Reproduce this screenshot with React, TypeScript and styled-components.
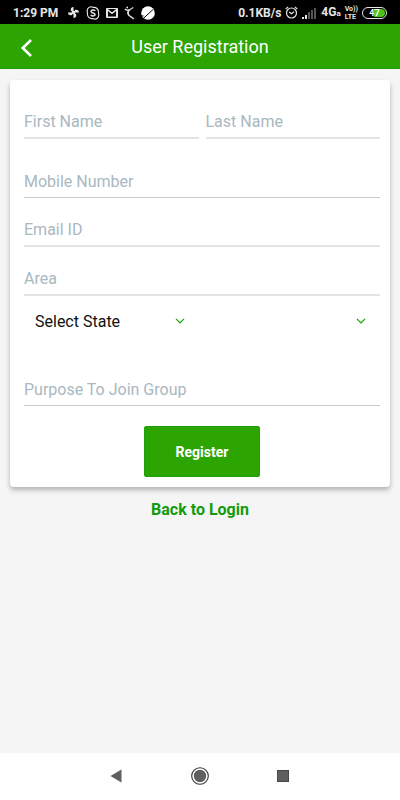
import React from "react";
import styled, { createGlobalStyle } from "styled-components";

const green = "#2ca502";

const GlobalStyle = createGlobalStyle`
  *, *::before, *::after { box-sizing: border-box; }
  body {
    margin: 0;
    background: #f5f5f5;
    font-family: Roboto, "Liberation Sans", sans-serif;
  }
`;

const Screen = styled.div`
  display: flex;
  flex-direction: column;
  min-height: 100vh;
  background: #f5f5f5;
`;

const StatusBar = styled.div`
  display: flex;
  align-items: center;
  justify-content: space-between;
  height: 24px;
  padding: 1px 13px 0;
  background: #000;
  color: #e6e6e6;
  font-size: 12px;
  font-weight: 700;
  line-height: 14px;
  white-space: nowrap;
`;

const StatusGroup = styled.div<{ $gap: number }>`
  display: flex;
  align-items: center;
  gap: ${(p) => p.$gap}px;
`;

const Clock = styled.span`
  padding-right: 3px;
`;

const Network = styled.span`
  display: flex;
  align-items: baseline;
`;

const NetworkSuffix = styled.span`
  font-size: 8px;
`;

const Volte = styled.span`
  display: flex;
  flex-direction: column;
  font-size: 7px;
  line-height: 8px;
`;

const Battery = styled.span`
  display: flex;
  align-items: center;
  justify-content: center;
  width: 25px;
  height: 12px;
  border: 1px solid #e6e6e6;
  border-radius: 6px;
  background: linear-gradient(90deg, #000 50%, #4cc417 50%);
  background-clip: content-box;
  padding: 1px;
  color: #fff;
  font-size: 9px;
  line-height: 8px;
`;

const Header = styled.header`
  display: grid;
  grid-template-columns: 48px 1fr 48px;
  align-items: center;
  height: 45px;
  background: ${green};
  border-bottom: 1px solid #169c06;
`;

const BackButton = styled.button`
  display: flex;
  align-items: center;
  height: 44px;
  padding: 4px 0 0 20px;
  border: 0;
  background: none;
  color: #fff;
  cursor: pointer;
`;

const Title = styled.h1`
  margin: 0;
  padding-top: 2px;
  color: #fff;
  font-size: 18px;
  font-weight: 400;
  line-height: 24px;
  text-align: center;
`;

const Main = styled.main`
  display: flex;
  flex: 1;
  flex-direction: column;
  padding: 11px 10px;
`;

const Card = styled.form`
  display: flex;
  flex-direction: column;
  padding: 10px 10px 10px 14px;
  border-radius: 4px;
  background: #fff;
  box-shadow: 0 3px 5px rgba(0, 0, 0, 0.27);
`;

const Columns = styled.div<{ $after: number }>`
  display: grid;
  grid-template-columns: 1fr 1fr;
  gap: 7px;
  margin-bottom: ${(p) => p.$after}px;
`;

const Field = styled.input<{ $soft?: boolean }>`
  width: 100%;
  min-width: 0;
  height: 49px;
  padding: 16px 0 0;
  border: 0;
  border-bottom: ${(p) => (p.$soft ? "2px solid #e4e4e4" : "1px solid #c9c9c9")};
  border-radius: 0;
  outline: 0;
  background: transparent;
  color: #111;
  font-family: inherit;
  font-size: 16px;
  line-height: 20px;

  &::placeholder {
    color: #a9b8c1;
    opacity: 1;
  }
`;

const SelectBox = styled.label`
  display: grid;
  align-items: center;
  height: 50px;

  & > * {
    grid-area: 1 / 1;
  }

  & > svg {
    justify-self: end;
    margin-right: 14px;
    pointer-events: none;
  }
`;

const Select = styled.select`
  width: 100%;
  height: 50px;
  padding: 0 28px 0 11px;
  border: 0;
  outline: 0;
  appearance: none;
  background: transparent;
  color: #111;
  font-family: inherit;
  font-size: 16px;
`;

const RegisterButton = styled.button`
  align-self: center;
  height: 51px;
  margin-top: 20px;
  padding: 0 31px;
  border: 1px solid #1d9f0a;
  border-radius: 2px;
  background: ${green};
  color: #fff;
  font-family: inherit;
  font-size: 14px;
  font-weight: 700;
  cursor: pointer;
`;

const LoginLink = styled.a`
  align-self: center;
  margin-top: 13px;
  color: #129b0b;
  font-size: 16px;
  font-weight: 700;
  line-height: 20px;
  text-decoration: none;
`;

const NavBar = styled.nav`
  display: flex;
  align-items: center;
  justify-content: center;
  gap: 59px;
  height: 47px;
  padding-bottom: 1px;
  background: #fff;
`;

const NavButton = styled.button`
  display: flex;
  align-items: center;
  justify-content: center;
  width: 24px;
  height: 24px;
  padding: 0;
  border: 0;
  background: none;
  cursor: pointer;
`;

const PinwheelIcon = () => (
  <svg width="13" height="13" viewBox="0 0 13 13" fill="#e6e6e6" aria-hidden="true">
    <path d="M6.5 6.5V1C4.2 1 3.2 3 4 5H6.5ZM6.5 6.5H12C12 4.2 10 3.2 8 4V6.5ZM6.5 6.5V12C8.8 12 9.8 10 9 8H6.5ZM6.5 6.5H1C1 8.8 3 9.8 5 9V6.5Z" />
    <path d="M4.8 4.8H8.2V8.2H4.8Z" />
  </svg>
);

const SkypeIcon = () => (
  <svg width="14" height="14" viewBox="0 0 14 14" fill="none" stroke="#e6e6e6" aria-hidden="true">
    <path d="M7.2 1.5C4.5 -0.3 0 1.8 1.5 6.8 0.9 10.8 3.8 13 6.8 12.5 10 14.2 13.8 11.8 12.5 7.2 13 3.4 10.2 1 7.2 1.5Z" strokeWidth="1.1" />
    <path d="M9.1 5C8.7 3.6 5.1 3.7 5.1 5.4 5.1 7.3 9.1 6.6 9.1 8.6 9.1 10.3 5.2 10.3 4.8 8.8" strokeWidth="1.5" />
  </svg>
);

const MailIcon = () => (
  <svg width="12" height="10" viewBox="0 0 12 10" aria-hidden="true">
    <rect width="12" height="10" rx="1" fill="#e6e6e6" />
    <path d="M2 8.5V2.2L6 5.6 10 2.2V8.5Z" fill="#000" />
    <path d="M2 2L6 5.2 10 2V1H2Z" fill="#000" />
    <path d="M1.5 1.6L6 5.3 10.5 1.6" fill="none" stroke="#e6e6e6" strokeWidth="1.4" />
  </svg>
);

const RunnerIcon = () => (
  <svg width="11" height="14" viewBox="0 0 11 14" fill="none" stroke="#e6e6e6" aria-hidden="true">
    <path d="M9.3 1.5C5 3.8 3.2 6 4.2 8.2 5.3 10.3 7.5 10.8 9.8 13" strokeWidth="1.4" />
    <path d="M0.8 3.2L3.2 4.4 5.6 3.6M3.6 5.6L4.8 9.4" strokeWidth="1.3" />
    <circle cx="3.2" cy="1.4" r="0.9" fill="#e6e6e6" stroke="none" />
  </svg>
);

const BallIcon = () => (
  <svg width="14" height="14" viewBox="0 0 14 14" aria-hidden="true">
    <circle cx="7" cy="7" r="6.8" fill="#fff" />
    <path d="M2.6 12.2L12.2 3.4M0 9.8L2.6 10" stroke="#000" strokeWidth="1" />
  </svg>
);

const AlarmIcon = () => (
  <svg width="13" height="13" viewBox="0 0 13 13" fill="none" stroke="#e6e6e6" strokeWidth="1.2" aria-hidden="true">
    <circle cx="6.5" cy="7" r="5" />
    <path d="M0.7 3L3.2 0.9M12.3 3L9.8 0.9M4.2 6L6.4 7.8 9 5.8" />
  </svg>
);

const SignalIcon = () => (
  <svg width="15" height="12" viewBox="0 0 15 12" aria-hidden="true">
    <path d="M0 10H2V12H0ZM3 8H5V12H3Z" fill="#e6e6e6" />
    <path d="M6 5H8V12H6ZM9 3H11V12H9ZM12 1H14V12H12Z" fill="#555" />
  </svg>
);

const BackIcon = () => (
  <svg width="13" height="20" viewBox="0 0 13 20" fill="none" aria-hidden="true">
    <path d="M11 2L2.8 10 11 18" stroke="currentColor" strokeWidth="2.6" />
  </svg>
);

const ChevronDown = () => (
  <svg width="10" height="6" viewBox="0 0 10 6" fill="none" aria-hidden="true">
    <path d="M1 0.8L5 4.8 9 0.8" stroke="#16a30c" strokeWidth="1.2" />
  </svg>
);

export default function App() {
  return (
    <Screen>
      <GlobalStyle />
      <StatusBar>
        <StatusGroup $gap={6}>
          <Clock>1:29 PM</Clock>
          <PinwheelIcon />
          <SkypeIcon />
          <MailIcon />
          <RunnerIcon />
          <BallIcon />
        </StatusGroup>
        <StatusGroup $gap={4}>
          <span>0.1KB/s</span>
          <AlarmIcon />
          <SignalIcon />
          <Network>
            4G<NetworkSuffix>a</NetworkSuffix>
          </Network>
          <Volte>
            <span>Vo))</span>
            <span>LTE</span>
          </Volte>
          <Battery>47</Battery>
        </StatusGroup>
      </StatusBar>
      <Header>
        <BackButton type="button" aria-label="Back">
          <BackIcon />
        </BackButton>
        <Title>User Registration</Title>
      </Header>
      <Main>
        <Card onSubmit={(e: React.FormEvent) => e.preventDefault()}>
          <Columns $after={10}>
            <Field $soft type="text" placeholder="First Name" aria-label="First Name" />
            <Field $soft type="text" placeholder="Last Name" aria-label="Last Name" />
          </Columns>
          <Field type="tel" placeholder="Mobile Number" aria-label="Mobile Number" />
          <Field $soft type="email" placeholder="Email ID" aria-label="Email ID" />
          <Field $soft type="text" placeholder="Area" aria-label="Area" />
          <Columns $after={11}>
            <SelectBox>
              <Select aria-label="State">
                <option>Select State</option>
              </Select>
              <ChevronDown />
            </SelectBox>
            <SelectBox>
              <Select aria-label="City">
                <option></option>
              </Select>
              <ChevronDown />
            </SelectBox>
          </Columns>
          <Field type="text" placeholder="Purpose To Join Group" aria-label="Purpose To Join Group" />
          <RegisterButton type="submit">Register</RegisterButton>
        </Card>
        <LoginLink href="#login">Back to Login</LoginLink>
      </Main>
      <NavBar>
        <NavButton type="button" aria-label="Back">
          <svg width="14" height="14" viewBox="0 0 14 14" aria-hidden="true">
            <path d="M11.5 0.5V13.5L0.5 7Z" fill="#606060" />
          </svg>
        </NavButton>
        <NavButton type="button" aria-label="Home">
          <svg width="18" height="18" viewBox="0 0 18 18" aria-hidden="true">
            <circle cx="9" cy="9" r="8.3" fill="none" stroke="#333" strokeWidth="1.1" />
            <circle cx="9" cy="9" r="6.2" fill="#606060" />
          </svg>
        </NavButton>
        <NavButton type="button" aria-label="Recent apps">
          <svg width="12" height="12" viewBox="0 0 12 12" aria-hidden="true">
            <rect x="0.5" y="0.5" width="11" height="11" fill="#606060" stroke="#484848" />
          </svg>
        </NavButton>
      </NavBar>
    </Screen>
  );
}
